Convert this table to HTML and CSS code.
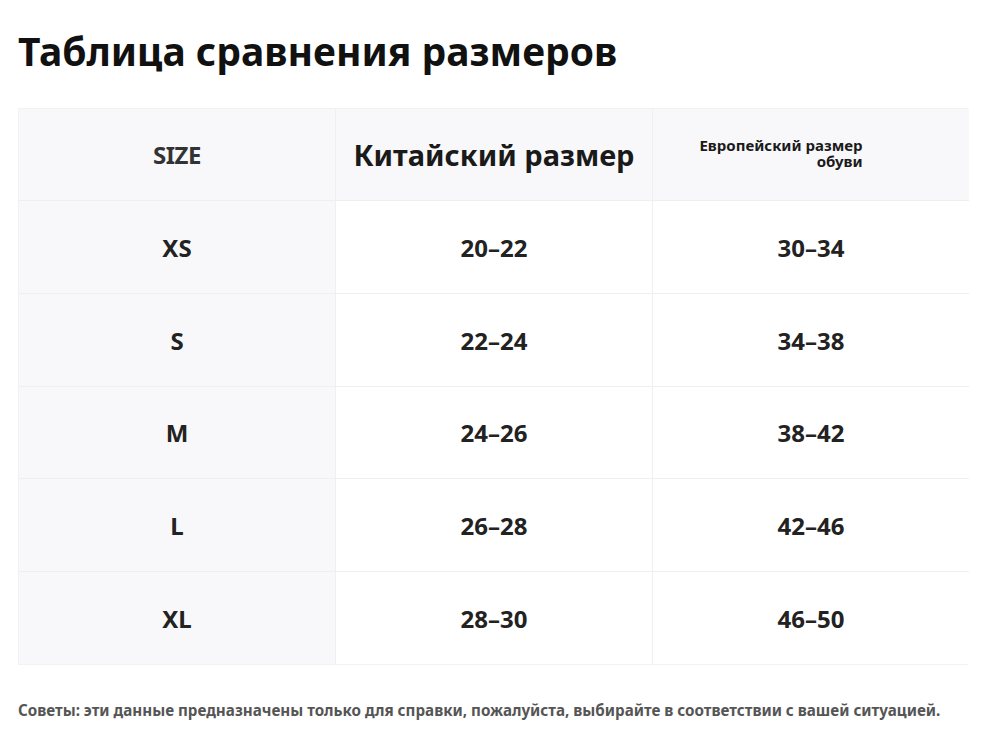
FILE: index.html
```html
<!DOCTYPE html>
<html lang="ru">
<head>
<meta charset="utf-8">
<title>Таблица сравнения размеров</title>
<link rel="stylesheet" href="styles.css">
</head>
<body>
<div class="page">
  <h1 class="title">Таблица сравнения размеров</h1>
  <div class="table">
    <div class="cell head side"><span class="h-size">SIZE</span></div>
    <div class="cell head"><span class="h-cn">Китайский размер</span></div>
    <div class="cell head"><span class="h-eu">Европейский размер<br>обуви</span></div>

    <div class="cell side">XS</div>
    <div class="cell">20–22</div>
    <div class="cell">30–34</div>

    <div class="cell side">S</div>
    <div class="cell">22–24</div>
    <div class="cell">34–38</div>

    <div class="cell side">M</div>
    <div class="cell">24–26</div>
    <div class="cell">38–42</div>

    <div class="cell side">L</div>
    <div class="cell">26–28</div>
    <div class="cell">42–46</div>

    <div class="cell side">XL</div>
    <div class="cell">28–30</div>
    <div class="cell">46–50</div>
  </div>
  <p class="note">Советы: эти данные предназначены только для справки, пожалуйста, выбирайте в соответствии с вашей ситуацией.</p>
</div>
</body>
</html>
```
FILE: styles.css
```css
html, body {
  margin: 0;
  padding: 0;
  background: #ffffff;
}
body {
  font-family: "Noto Sans", "Open Sans", sans-serif;
  color: #222;
}
.page {
  padding: 0 18px;
  width: 964px;
}
.title {
  margin: 0;
  padding-top: 25px;
  height: 108px;
  box-sizing: border-box;
  font-size: 39px;
  line-height: 52px;
  font-weight: 700;
  color: #111;
}
.table {
  display: grid;
  grid-template-columns: 317px 317px 316px;
  grid-template-rows: 92px 93px 93px 92px 93px 92px;
  width: 950px;
  border: 1px solid #f2f2f4;
  box-sizing: border-box;
}
.cell {
  display: flex;
  align-items: center;
  justify-content: center;
  font-size: 24px;
  font-weight: 700;
  color: #222;
  border-right: 1px solid #efeff2;
  border-bottom: 1px solid #efeff2;
  background: #ffffff;
}
.cell:nth-child(3n) {
  border-right: none;
}
.cell:nth-last-child(-n+3) {
  border-bottom: none;
}
.side {
  background: #f8f8fa;
}
.head {
  background: #f8f8fa;
}
.h-size {
  font-size: 24px;
  color: #333;
  letter-spacing: -0.5px;
}
.h-cn {
  font-size: 29px;
  color: #1a1a1a;
}
.h-eu {
  font-size: 15px;
  line-height: 16px;
  text-align: right;
  color: #1a1a1a;
  margin-right: 60px;
  margin-top: -4px;
}
.note {
  margin: 35px 0 0;
  font-size: 15.2px;
  font-weight: 700;
  color: #555;
  line-height: 20px;
  white-space: nowrap;
}
```
